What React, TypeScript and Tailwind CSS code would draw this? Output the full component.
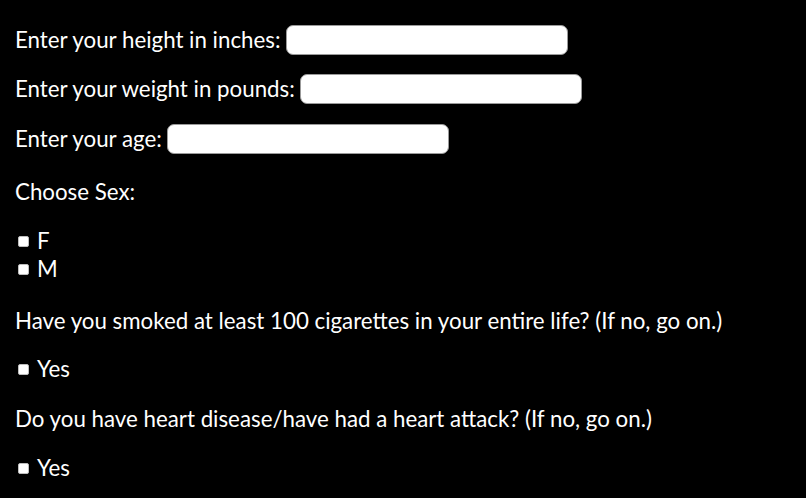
import { useState } from 'react'

function TextRow({ label, className }: { label: string; className?: string }) {
  const [value, setValue] = useState('')
  return (
    <div className={`flex h-[28px] items-center ${className ?? ''}`}>
      <label className="whitespace-nowrap">{label}</label>
      <input
        type="text"
        value={value}
        onChange={(e) => setValue(e.target.value)}
        className="ml-[5px] h-[30px] w-[282px] rounded-[7px] border border-[#9a9a9a] bg-white px-2 text-black outline-none"
      />
    </div>
  )
}

function Check({ label, className }: { label: string; className?: string }) {
  const [checked, setChecked] = useState(false)
  return (
    <label className={`flex h-[28px] items-center ${className ?? ''}`}>
      <span
        onClick={() => setChecked(!checked)}
        className={`ml-[3px] mr-[8px] h-[11px] w-[11px] rounded-[2px] border border-[#bdbdbd] ${checked ? 'bg-blue-500' : 'bg-white'}`}
      />
      <span>{label}</span>
    </label>
  )
}

export default function App() {
  return (
    <div className="min-h-[498px] bg-black pl-[15px] pt-[26px] text-[22.3px] text-white" style={{ fontFamily: 'Lato, "Open Sans", sans-serif' }}>
      <TextRow label="Enter your height in inches:" />
      <TextRow label="Enter your weight in pounds:" className="mt-[21px]" />
      <TextRow label="Enter your age:" className="mt-[22px]" />
      <div className="mt-[25px] flex h-[28px] items-center">Choose Sex:</div>
      <Check label="F" className="mt-[21px]" />
      <Check label="M" />
      <div className="mt-[24px] flex h-[28px] items-center">
        Have you smoked at least 100 cigarettes in your entire life? (If no, go on.)
      </div>
      <Check label="Yes" className="mt-[20px]" />
      <div className="mt-[22px] flex h-[28px] items-center">
        Do you have heart disease/have had a heart attack? (If no, go on.)
      </div>
      <Check label="Yes" className="mt-[21px]" />
    </div>
  )
}
